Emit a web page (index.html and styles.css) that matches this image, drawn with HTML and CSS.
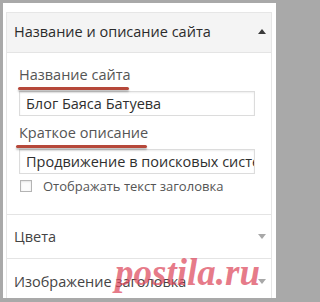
FILE: index.html
```html
<!DOCTYPE html>
<html lang="ru">
<head>
<meta charset="utf-8">
<link rel="stylesheet" href="styles.css">
</head>
<body>
<div class="frame">
  <div class="panel">
    <div class="section-head open">
      <span class="head-title">Название и описание сайта</span>
      <span class="arrow up"></span>
    </div>
    <div class="section-body">
      <label class="field-label"><span class="mark">Название сайта</span></label>
      <div class="input">Блог Баяса Батуева</div>
      <label class="field-label second"><span class="mark mark2">Краткое описание</span></label>
      <div class="input">Продвижение в поисковых системах</div>
      <div class="check-row">
        <span class="checkbox"></span>
        <span class="check-text">Отображать текст заголовка</span>
      </div>
    </div>
    <div class="section-head closed">
      <span class="head-title">Цвета</span>
      <span class="arrow down"></span>
    </div>
    <div class="section-head closed last">
      <span class="head-title">Изображение заголовка</span>
      <span class="arrow down"></span>
    </div>
  </div>
  <div class="watermark">postila.ru</div>
</div>
</body>
</html>
```

FILE: styles.css
```css
html, body {
  margin: 0;
  padding: 0;
}
body {
  background: #a9a9a9;
  width: 280px;
  height: 302px;
  overflow: hidden;
  font-family: "Open Sans", "Noto Sans", sans-serif;
}
.frame {
  position: relative;
  margin: 3px 4px 0 3px;
  height: 295px;
  background: #fff;
  padding: 9px 4px 0 3px;
  box-sizing: border-box;
  overflow: hidden;
}
.panel {
  border: 1px solid #e6e6e6;
  border-bottom: none;
  height: 100%;
  box-sizing: border-box;
}
.section-head {
  display: flex;
  align-items: center;
  justify-content: space-between;
  padding: 0 5px 0 7px;
  border-bottom: 1px solid #e4e4e4;
  box-sizing: border-box;
}
.section-head.open {
  background: #f4f4f4;
  height: 40px;
  padding-bottom: 2px;
}
.section-head.closed {
  height: 44px;
}
.section-head.last {
  border-bottom: none;
}
.head-title {
  font-size: 14.5px;
  color: #2b2b2b;
  white-space: nowrap;
}
.closed .head-title {
  color: #444;
}
.arrow {
  width: 0;
  height: 0;
  border-left: 4px solid transparent;
  border-right: 4px solid transparent;
}
.arrow.up {
  border-bottom: 5px solid #3a3a3a;
}
.arrow.down {
  border-top: 5px solid #a8a8a8;
}
.section-body {
  padding: 10px 16px 19px 12px;
  border-bottom: 1px solid #e4e4e4;
}
.field-label {
  display: block;
  height: 28px;
}
.field-label.second {
  margin-top: 5px;
}
.mark {
  position: relative;
  display: inline-block;
  font-size: 14.5px;
  line-height: 20px;
  color: #555;
}
.mark::after {
  content: "";
  position: absolute;
  left: -1px;
  right: 2px;
  top: 22px;
  height: 3px;
  background: #b6483a;
  border-radius: 2px;
  box-shadow: 0 2px 2px rgba(0,0,0,0.25);
}
.mark2::after {
  left: -3px;
  right: 1px;
}
.input {
  height: 25px;
  border: 1px solid #dcdcdc;
  box-shadow: inset 0 1px 2px rgba(0,0,0,0.07);
  box-sizing: border-box;
  padding: 0 6px;
  font-size: 14.5px;
  line-height: 23px;
  color: #2f2f2f;
  white-space: nowrap;
  overflow: hidden;
}
.check-row {
  display: flex;
  align-items: center;
  margin-top: 3px;
  height: 18px;
}
.checkbox {
  width: 10px;
  height: 10px;
  border: 1px solid #b4b4b4;
  box-shadow: inset 0 1px 2px rgba(0,0,0,0.1);
  background: #fbfbfb;
  margin-left: 1px;
}
.check-text {
  margin-left: 11px;
  font-size: 13px;
  line-height: 18px;
  color: #555;
}
.watermark {
  position: absolute;
  left: 112px;
  top: 248px;
  font-family: "Liberation Serif", serif;
  font-weight: bold;
  font-style: italic;
  font-size: 37px;
  color: rgba(221, 72, 92, 0.72);
  pointer-events: none;
}
```
